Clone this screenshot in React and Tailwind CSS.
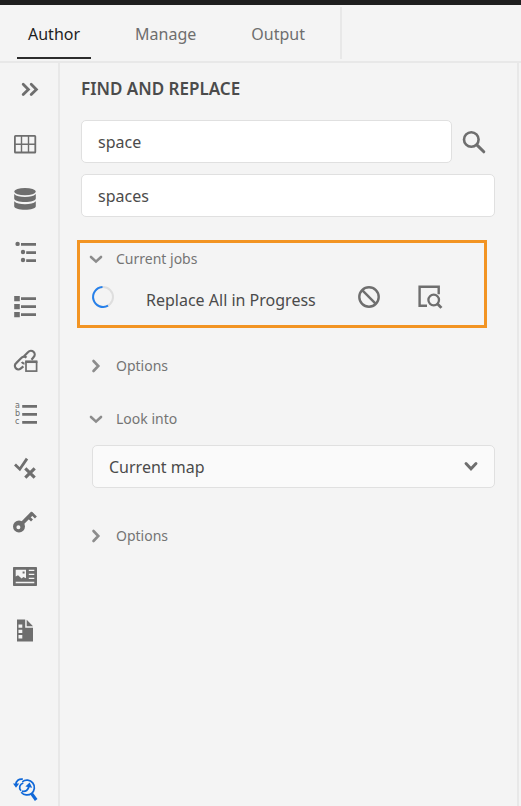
import { useState } from "react";

function Icon({ children, label }) {
  return (
    <svg
      viewBox="0 0 24 24"
      className="size-6 shrink-0 overflow-visible"
      fill="currentColor"
      role={label ? "img" : undefined}
      aria-label={label}
      aria-hidden={label ? undefined : true}
    >
      {children}
    </svg>
  );
}

const stroke = { fill: "none", stroke: "currentColor" };

const sidebarItems = [
  {
    name: "Repository",
    art: (
      <g {...stroke}>
        <rect x="1.9" y="3.9" width="20.4" height="16.6" rx="0.6" strokeWidth="1.8" />
        <path d="M8.5 4v16M15.5 4v16M2 12.2h20" strokeWidth="1.4" />
      </g>
    ),
  },
  {
    name: "Data sources",
    art: (
      <g>
        <ellipse cx="12" cy="5.6" rx="10.8" ry="3.7" />
        <path d="M1.2 8c2 2.2 6 3 10.8 3s8.8-.8 10.8-3v4.5c0 2-4.8 3.6-10.8 3.6S1.2 14.5 1.2 12.5z" />
        <path d="M1.2 15.2c2 2.2 6 3 10.8 3s8.800-.8 10.800-3v5c0 2-4.800 3.600-10.800 3.600S1.200 22.200 1.200 20.200z" />
      </g>
    ),
  },
  {
    name: "Outline",
    art: (
      <g>
        <circle cx="4.6" cy="3.9" r="2.2" />
        <circle cx="10" cy="12" r="2.2" />
        <circle cx="10" cy="20" r="2.2" />
        <path d="M8 3h15v2.7H8zM13.2 11.2H23v2.7h-9.8zM13.2 19.2H23v2.7h-9.8z" />
      </g>
    ),
  },
  {
    name: "List view",
    art: (
      <path d="M1.2 2h5.6v5.3H1.2zM1.2 10h5.6v5.3H1.2zM1.2 18h5.6v5.3H1.2zM8 3.2h15v2.7H8zM8 11.2h15v2.7H8zM8 19.2h15v2.7H8z" />
    ),
  },
  {
    name: "Reusable content",
    art: (
      <g {...stroke} strokeWidth="2.2">
        <path d="M11 8.2l4.200-4.200a3.600 3.600 0 0 1 5.500 5.100l-2.200 2.600" />
        <path d="M13.500 9.600a3.600 3.600 0 0 0-5 .2l-5.300 5.300a3.500 3.500 0 0 0 4.400 5.500l2.800-2.300" />
        <path d="M8.800 14a3.300 3.300 0 0 0 2.700 1.600" />
        <rect x="13" y="14.2" width="10.6" height="8.9" strokeWidth="1.7" />
        <path d="M12.200 13.700h12.200" strokeWidth="2.6" />
      </g>
    ),
  },
  {
    name: "Glossary",
    art: (
      <g>
        <g fontFamily="DejaVu Sans, sans-serif" fontSize="8">
          <text x="2" y="6">a</text>
          <text x="2" y="14">b</text>
          <text x="2" y="22">c</text>
        </g>
        <path d="M9.2 3.1H24v2.700H9.200zM9.200 11.100H24v2.700H9.200zM9.200 19.100H24v2.700H9.200z" />
      </g>
    ),
  },
  {
    name: "Conditions",
    art: (
      <g {...stroke}>
        <path d="M2 8.500l4.800 4.700L14 2.600" strokeWidth="2.8" />
        <path d="M12.300 12.300l9.400 9.400M21.700 12.300l-9.400 9.400" strokeWidth="3.1" />
      </g>
    ),
  },
  {
    name: "Keys",
    art: (
      <g>
        <path
          fillRule="evenodd"
          d="M6 10.400a6 6 0 1 0 0 12 6 6 0 0 0 0-12zM5.400 15.200a2 2 0 1 1 0 4 2 2 0 0 1 0-4z"
        />
        <path d="M8.500 14L19.600 2.900" fill="none" stroke="currentColor" strokeWidth="3.8" />
        <path d="M18.300 3l4.600 4.400M14.800 6.400l4.200 4.100" fill="none" stroke="currentColor" strokeWidth="2.8" />
      </g>
    ),
  },
  {
    name: "Snippets",
    art: (
      <path
        fillRule="evenodd"
        d="M.8 3h22.400a.8.8 0 0 1 .8.800v17.400a.8.8 0 0 1-.8.800H.8a.8.8 0 0 1-.8-.8V3.800A.8.800 0 0 1 .8 3zM2.700 5.800v6.800l2.300-1.300 3.600 3.200 1.800-1.500 2.600 1.200V5.800zm6.900 1.700h2v2h-2zM15.800 5.800v1.300h5.500V5.800zm0 4v1.300h5.500V9.800zm0 4v1.300h5.500v-1.300zM2.700 17.800v1.400h18.600v-1.400z"
      />
    ),
  },
  {
    name: "Templates",
    art: (
      <g>
        <path
          fillRule="evenodd"
          d="M4 1.500h8.200v8.200H20v13.800H4zm1.500 5v3.300h3.800V6.500zm0 5.300v3.300h3.800v-3.300zm0 5.300v3.300h3.800v-3.300z"
        />
        <path d="M13.700 1.800l6.300 6.400h-6.300z" />
      </g>
    ),
  },
];

function Chevron({ open }) {
  return (
    <svg
      viewBox="0 0 16 16"
      className="size-4 shrink-0 text-[#8c8c8c]"
      fill="none"
      stroke="currentColor"
      strokeWidth="2.6"
      strokeLinecap="round"
      aria-hidden="true"
    >
      <path d={open ? "M3 6l5 4.600L13 6" : "M5.500 3L10.300 8l-4.800 5"} />
    </svg>
  );
}

function SectionToggle({ label, open, onClick }) {
  return (
    <button
      type="button"
      aria-expanded={open}
      onClick={onClick}
      className="flex h-6 items-center gap-3 text-sm leading-6 text-[#747474]"
    >
      <Chevron open={open} />
      {label}
    </button>
  );
}

function Tab({ label, active }) {
  return (
    <button
      type="button"
      role="tab"
      aria-selected={active}
      className={
        active
          ? "border-b-2 border-[#2c2c2c] px-[11px] pt-1 text-[#1e1e1e]"
          : "border-b-2 border-transparent px-[11px] pt-1 text-[#6e6e6e]"
      }
    >
      {label}
    </button>
  );
}

export default function App() {
  const [find, setFind] = useState("space");
  const [replace, setReplace] = useState("spaces");
  const [open, setOpen] = useState({ scope: false, extra: false });

  return (
    <div className="flex min-h-screen flex-col border-t-[5px] border-[#1e1e1e] bg-[#f4f4f4] font-['Noto_Sans',sans-serif] text-[#4b4b4b]">
      <header className="flex h-[58px] border-b-2 border-[#e8e8e8] pt-[2px]">
        <div
          role="tablist"
          className="mb-[2px] flex gap-[33px] border-r-2 border-[#e8e8e8] pr-6 pl-[17px] text-base"
        >
          <Tab label="Author" active />
          <Tab label="Manage" active={false} />
          <Tab label="Output" active={false} />
        </div>
      </header>

      <div className="flex grow">
        <nav
          aria-label="Panels"
          className="flex w-[60px] shrink-0 flex-col border-r-2 border-[#e8e8e8] pl-[13px] text-[#6e6e6e]"
        >
          <button type="button" aria-label="Expand panel" className="flex h-[54px] items-center pl-1">
            <Icon>
              <path
                d="M6.200 6.200l5.200 5.200-5.200 5.200M14.200 6.200l5.200 5.200-5.200 5.200"
                fill="none"
                stroke="currentColor"
                strokeWidth="2.8"
                strokeLinecap="round"
              />
            </Icon>
          </button>
          {sidebarItems.map((item) => (
            <button key={item.name} type="button" aria-label={item.name} className="flex h-[54px] items-center">
              <Icon>{item.art}</Icon>
            </button>
          ))}
          <button type="button" aria-label="Find and replace" className="mt-auto flex h-8 items-center text-[#1068d8]">
            <Icon>
              <g {...stroke} strokeWidth="1.7">
                <path d="M9.300 3.800A7.400 7.400 0 1 1 8.200 14.200" />
                <path d="M18.600 15.600l4.600 6.400" strokeWidth="3.2" />
                <path d="M9.800 1.200C5.800.6 3 2.800 2.900 6.600" />
                <path d="M10.300 5C6.600 6.200 5.400 9.800 8 12.800" />
                <path d="M9 13.200c3.600.9 6.300-1.200 6.900-4.800" strokeWidth="1.9" />
              </g>
              <path d="M0 5.600h6.200L3 9.800zM12.400 8.600l6.800 1.200-2.600-5.200z" />
            </Icon>
          </button>
        </nav>

        <main className="mr-[2px] grow border-r-2 border-[#e8e8e8] pr-[22px] pl-[21px]">
          <h1 className="pt-[14px] text-[17px] leading-6 font-semibold">FIND AND REPLACE</h1>

          <form className="mt-[19px] flex flex-col gap-[11px]" onSubmit={(e) => e.preventDefault()}>
            <div className="flex items-center gap-[10px]">
              <input
                aria-label="Find"
                value={find}
                onChange={(e) => setFind(e.target.value)}
                className="h-[43px] min-w-0 grow rounded-[5px] border border-[#e0e0e0] bg-white px-4 text-base"
              />
              <button type="submit" aria-label="Search" className="mr-[9px] text-[#6e6e6e]">
                <Icon>
                  <g {...stroke}>
                    <circle cx="9.3" cy="9.5" r="7.3" strokeWidth="2.6" />
                    <path d="M14.800 14.900l7 6.900" strokeWidth="3" strokeLinecap="round" />
                  </g>
                </Icon>
              </button>
            </div>
            <input
              aria-label="Replace with"
              value={replace}
              onChange={(e) => setReplace(e.target.value)}
              className="h-[43px] rounded-[5px] border border-[#e0e0e0] bg-white px-4 text-base"
            />
          </form>

          <section className="mt-[23px] mr-2 -ml-1 h-[88px] border-3 border-[#f29423] pt-1 pl-2">
            <SectionToggle label="Current jobs" open />
            <div className="flex items-start pt-[14px] pr-[42px] pl-[3px]">
              <Icon label="In progress">
                <g {...stroke} strokeWidth="2">
                  <circle cx="12" cy="12" r="10" stroke="#dedede" />
                  <path d="M11.500 2A10 10 0 1 0 17 20.700" stroke="#2680eb" />
                </g>
              </Icon>
              <p className="ml-[31px] grow pt-[3px] text-base leading-6 whitespace-nowrap">Replace All in Progress</p>
              <div className="flex gap-[37px] text-[#6e6e6e]">
                <button type="button" aria-label="Cancel job">
                  <Icon>
                    <g {...stroke} strokeWidth="2.4">
                      <circle cx="12" cy="12" r="9.7" />
                      <path d="M5.200 5.200l13.600 13.600" />
                    </g>
                  </Icon>
                </button>
                <button type="button" aria-label="Preview results">
                  <Icon>
                    <g {...stroke}>
                      <path d="M9 20.700H1.600V1.800h19.100v7.500" strokeWidth="2.4" />
                      <circle cx="15.7" cy="15" r="5.3" strokeWidth="2.3" />
                      <path d="M19.400 18.700l4 4.200" strokeWidth="2.8" />
                    </g>
                  </Icon>
                </button>
              </div>
            </div>
          </section>

          <div className="mt-[26px] pl-[7px]">
            <SectionToggle
              label="Options"
              open={open.scope}
              onClick={() => setOpen({ ...open, scope: !open.scope })}
            />
          </div>

          <div className="mt-[29px] pl-[7px]">
            <SectionToggle label="Look into" open />
          </div>
          <div className="relative mt-[14px] ml-[11px]">
            <select
              aria-label="Look into"
              defaultValue="map"
              className="h-[43px] w-full appearance-none rounded-[5px] border border-[#e0e0e0] bg-[#fafafa] px-4 text-base"
            >
              <option value="map">Current map</option>
            </select>
            <svg
              viewBox="0 0 16 16"
              className="pointer-events-none absolute top-[13px] right-4 size-4 text-[#6e6e6e]"
              fill="none"
              stroke="currentColor"
              strokeWidth="2.9"
              strokeLinecap="round"
              aria-hidden="true"
            >
              <path d="M3 5.500l5 5.300 5-5.300" />
            </svg>
          </div>

          <div className="mt-9 pl-[7px]">
            <SectionToggle
              label="Options"
              open={open.extra}
              onClick={() => setOpen({ ...open, extra: !open.extra })}
            />
          </div>
        </main>
      </div>
    </div>
  );
}
